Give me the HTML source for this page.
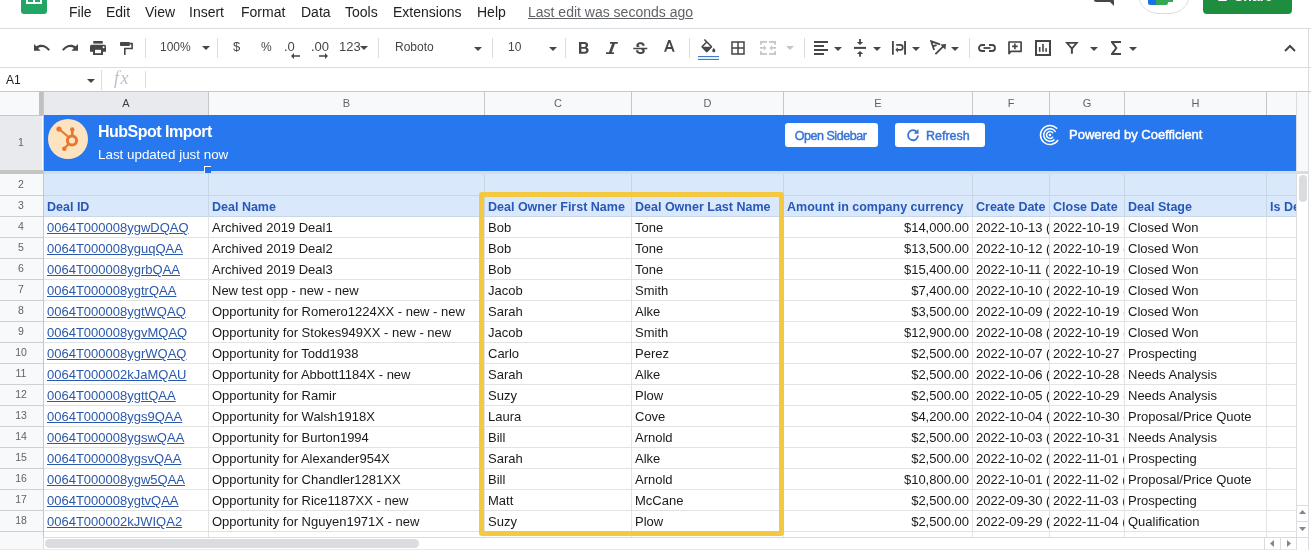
<!DOCTYPE html>
<html><head><meta charset="utf-8"><style>
*{box-sizing:border-box;margin:0;padding:0}
html,body{width:1311px;height:550px;overflow:hidden;background:#fff}
body{will-change:transform}
body{position:relative;font-family:"Liberation Sans",sans-serif;color:#202124}
.ab{position:absolute}
.menu{position:absolute;top:3px;font-size:14px;line-height:18px;color:#202124;white-space:nowrap}
.hl{position:absolute;background:#dadce0}
.sep{position:absolute;top:38px;width:1px;height:20px;background:#dadce0}
.tb{position:absolute;font-size:12px;line-height:14px;color:#444746;white-space:nowrap}
.dd{position:absolute;width:0;height:0;border-left:4px solid transparent;border-right:4px solid transparent;border-top:4px solid #444746}
.ch{position:absolute;top:92px;height:23px;font-size:11px;line-height:23px;text-align:center;color:#5f6368;background:#f8f9fa;border-right:1px solid #c7c7c7}
.rh{position:absolute;left:0;width:42px;font-size:10.5px;text-align:center;color:#5f6368;background:#f8f9fa}
.cell{position:absolute;overflow:hidden;white-space:nowrap;font-size:13px;line-height:21px;padding-left:3px;color:#1a1a1a}
.hdr{font-weight:bold;color:#2957b8;font-size:12.5px}
.lnk{color:#2a58ac;text-decoration:underline}
.num{text-align:right;padding-left:0;padding-right:3px}
svg{position:absolute;overflow:visible}
</style></head><body>

<div class="ab" style="left:21px;top:-12px;width:26px;height:26px;background:#23a566;border-radius:3px"></div>
<div class="ab" style="left:26px;top:-4px;width:16px;height:8px;border:2px solid #fff;background:#23a566"></div>
<div class="ab" style="left:33px;top:-4px;width:2px;height:8px;background:#fff"></div>
<div class="menu" style="left:69px">File</div>
<div class="menu" style="left:106px">Edit</div>
<div class="menu" style="left:145px">View</div>
<div class="menu" style="left:189px">Insert</div>
<div class="menu" style="left:241px">Format</div>
<div class="menu" style="left:301px">Data</div>
<div class="menu" style="left:345px">Tools</div>
<div class="menu" style="left:393px">Extensions</div>
<div class="menu" style="left:477px">Help</div>
<div class="menu" style="left:528px;color:#5f6368;text-decoration:underline">Last edit was seconds ago</div>
<div class="ab" style="left:1094px;top:-11px;width:20px;height:13px;background:#444746;border-radius:2px"></div>
<div class="ab" style="left:1096px;top:-11px;width:16px;height:11px;background:#fff"></div>
<svg style="left:1106px;top:0" width="8" height="6"><path d="M3 1 L8 1 L8 6 Z" fill="#444746"/></svg>
<div class="ab" style="left:1138px;top:-26px;width:52px;height:40px;border:1px solid #dadce0;border-radius:20px;background:#fff"></div>
<div class="ab" style="left:1148px;top:-8px;width:8px;height:13px;background:#1a73e8;border-radius:0 0 0 2px"></div>
<div class="ab" style="left:1156px;top:-8px;width:12px;height:13px;background:#34a853;border-radius:0 0 2px 0"></div>
<div class="ab" style="left:1168px;top:-4px;width:5px;height:6px;background:#34a853"></div>
<div class="ab" style="left:1203px;top:-22px;width:89px;height:36px;background:#1e8e3e;border-radius:4px"></div>
<div class="ab" style="left:1218px;top:-7px;width:9px;height:8px;background:#fff;border-radius:1px"></div>
<div class="ab" style="left:1234px;top:-12px;font-size:14px;font-weight:bold;color:#fff;line-height:16px">Share</div>
<div class="hl" style="left:0;top:28px;width:1311px;height:1px"></div>
<div class="hl" style="left:0;top:67px;width:1311px;height:1px"></div>
<div class="sep" style="left:145px"></div>
<div class="sep" style="left:217px"></div>
<div class="sep" style="left:378px"></div>
<div class="sep" style="left:492px"></div>
<div class="sep" style="left:565px"></div>
<div class="sep" style="left:689px"></div>
<div class="sep" style="left:804px"></div>
<div class="sep" style="left:969px"></div>
<svg style="left:34px;top:44px" width="16" height="7" viewBox="0 0 16 7"><path d="M0 0 L2.3 2.3 C5.8 -0.2 11.8 -0.3 16 5.8 L14.4 6.8 C11.2 2.3 7.2 2.1 4.1 4.1 L6.5 6.7 H0 Z" fill="#444746"/></svg>
<svg style="left:62px;top:44px" width="16" height="7" viewBox="0 0 16 7"><path transform="translate(16 0) scale(-1 1)" d="M0 0 L2.3 2.3 C5.8 -0.2 11.8 -0.3 16 5.8 L14.4 6.8 C11.2 2.3 7.2 2.1 4.1 4.1 L6.5 6.7 H0 Z" fill="#444746"/></svg>
<svg style="left:90px;top:41px" width="16" height="14" viewBox="0 0 16 14"><rect x="3.3" y="0" width="9.4" height="2.6" fill="#444746"/><path d="M1.5 3.8 H14.5 A1.5 1.5 0 0 1 16 5.3 V10.8 H13 V14 H3 V10.8 H0 V5.3 A1.5 1.5 0 0 1 1.5 3.8 Z" fill="#444746"/><rect x="5" y="8.8" width="6" height="3.4" fill="#fff"/><circle cx="13.6" cy="6.3" r="1" fill="#fff"/></svg>
<svg style="left:120px;top:41.5px" width="14" height="14" viewBox="0 0 14 14"><rect x="0" y="0" width="9.8" height="4.1" rx="0.8" fill="#444746"/><path d="M9.6 1.6 H12.1 V6.5 H4.8 V13" fill="none" stroke="#444746" stroke-width="1.6"/></svg>
<div class="tb" style="left:160px;top:40px">100%</div>
<div class="dd" style="left:202px;top:46px"></div>
<div class="tb" style="left:233px;top:40px;font-size:13px">$</div>
<div class="tb" style="left:261px;top:40px;font-size:12px">%</div>
<div class="tb" style="left:284px;top:40px;font-size:13px">.0</div>
<svg style="left:291px;top:53px" width="9" height="6" viewBox="0 0 9 6"><path d="M0 3 L3 0 V2.2 H9 V3.8 H3 V6 Z" fill="#444746"/></svg>
<div class="tb" style="left:311px;top:40px;font-size:13px">.00</div>
<svg style="left:319px;top:53px" width="9" height="6" viewBox="0 0 9 6"><path d="M9 3 L6 0 V2.2 H0 V3.8 H6 V6 Z" fill="#444746"/></svg>
<div class="tb" style="left:339px;top:40px;font-size:13px">123</div>
<div class="dd" style="left:360px;top:46px"></div>
<div class="tb" style="left:395px;top:40px">Roboto</div>
<div class="dd" style="left:474px;top:47px"></div>
<div class="tb" style="left:508px;top:40px">10</div>
<div class="dd" style="left:549px;top:47px"></div>
<svg style="left:579px;top:42px" width="10" height="12" viewBox="0 0 10 12"><path fill-rule="evenodd" d="M0 0 H5.4 C7.8 0 9.1 1.2 9.1 3 C9.1 4.1 8.5 4.9 7.6 5.4 C8.9 5.8 9.6 6.9 9.6 8.3 C9.6 10.5 8 11.8 5.6 11.8 H0 Z M2.4 2 V4.9 H5.2 C6.2 4.9 6.7 4.3 6.7 3.45 C6.7 2.55 6.2 2 5.2 2 Z M2.4 6.8 V9.8 H5.5 C6.6 9.8 7.2 9.2 7.2 8.3 C7.2 7.4 6.6 6.8 5.5 6.8 Z" fill="#444746"/></svg>
<svg style="left:606px;top:42px" width="12" height="12" viewBox="0 0 12 12"><path d="M4 0 H11.8 V1.8 H8.9 L5.8 10.2 H7.9 V12 H0 V10.2 H3 L6.1 1.8 H4 Z" fill="#444746"/></svg>
<svg style="left:630.7px;top:40px" width="18.7" height="18.7" viewBox="0 0 24 24"><path d="M7.24 8.75c-.26-.48-.39-1.03-.39-1.67 0-.61.13-1.16.4-1.67.26-.5.63-.93 1.11-1.29.48-.35 1.050-.63 1.7-.83.66-.19 1.39-.29 2.18-.29.81 0 1.54.11 2.21.34.66.22 1.23.54 1.69.94.47.4.83.88 1.08 1.43.25.55.38 1.15.38 1.81h-3.01c0-.31-.05-.59-.15-.85-.09-.27-.24-.49-.44-.68-.2-.19-.45-.33-.75-.44-.3-.1-.66-.16-1.06-.16-.39 0-.74.04-1.030.13-.29.09-.53.21-.72.36-.19.16-.34.34-.44.55-.1.21-.15.43-.15.66 0 .48.25.88.74 1.21.38.25.77.48 1.41.7H7.39c-.05-.08-.11-.17-.15-.25zM21 12v-2H3v2h9.62c.18.07.4.14.55.2.37.17.66.34.87.51.21.17.35.36.43.57.07.2.11.43.11.69 0 .23-.05.45-.14.66-.09.2-.23.38-.42.53-.19.15-.42.26-.71.35-.29.08-.63.13-1.01.13-.43 0-.83-.04-1.18-.13s-.66-.23-.91-.42c-.25-.19-.45-.44-.59-.75-.14-.31-.25-.76-.25-1.21H6.4c0 .55.08 1.13.24 1.58.16.45.37.85.65 1.210.28.35.6.66.98.92.37.26.78.48 1.22.65.44.17.9.3 1.38.39.48.08.96.13 1.44.13.8 0 1.53-.09 2.18-.28s1.21-.45 1.67-.79c.46-.34.82-.77 1.07-1.27s.38-1.07.38-1.71c0-.6-.1-1.14-.31-1.61-.05-.11-.11-.23-.17-.33H21z" fill="#444746"/></svg>
<svg style="left:663.5px;top:40.2px" width="11" height="12" viewBox="0 0 11 12"><path fill-rule="evenodd" d="M4.3 0 H6.4 L10.7 11.8 H8.6 L7.6 9 H3.1 L2.1 11.8 H0 Z M3.8 7.1 H6.9 L5.35 2.6 Z" fill="#444746"/></svg>
<svg style="left:698.6px;top:39.4px" width="18.7" height="18.7" viewBox="0 0 24 24"><path d="M16.56 8.94L7.62 0 6.21 1.41l2.38 2.38-5.15 5.15c-.59.59-.59 1.54 0 2.12l5.5 5.5c.29.29.68.44 1.06.44s.77-.15 1.06-.44l5.5-5.5c.59-.58.59-1.53 0-2.12zM5.21 10L10 5.21 14.790 10H5.21zM19 11.5s-2 2.17-2 3.5c0 1.1.9 2 2 2s2-.9 2-2c0-1.33-2-3.5-2-3.5z" fill="#444746"/></svg>
<div class="ab" style="left:698px;top:56px;width:21px;height:1px;background:#4a76c9"></div>
<div class="ab" style="left:698px;top:57px;width:21px;height:2px;background:#d9f3ff"></div><div class="ab" style="left:698px;top:59px;width:21px;height:1px;background:#4a76c9"></div>
<svg style="left:728.75px;top:39.15px" width="18" height="18" viewBox="0 0 24 24"><path d="M3 3v18h18V3H3zm8 16H5v-6h6v6zm0-8H5V5h6v6zm8 8h-6v-6h6v6zm0-8h-6V5h6v6z" fill="#444746"/></svg>
<svg style="left:760px;top:41px" width="16" height="14" viewBox="0 0 16 14"><g fill="#c4c7c5"><rect x="0" y="0" width="7" height="1.8"/><rect x="0" y="0" width="1.8" height="3.7"/><rect x="9" y="0" width="7" height="1.8"/><rect x="14.2" y="0" width="1.8" height="3.7"/><rect x="0" y="12" width="7" height="1.8"/><rect x="0" y="10.2" width="1.8" height="3.6"/><rect x="9" y="12" width="7" height="1.8"/><rect x="14.2" y="10.2" width="1.8" height="3.6"/><path d="M0 6 H4 V4.3 L6.6 6.9 L4 9.5 V7.8 H0 Z"/><path d="M16 6 H12 V4.3 L9.4 6.9 L12 9.5 V7.8 H16 Z"/></g></svg>
<div class="dd" style="left:786px;top:46px;border-top-color:#c4c7c5"></div>
<svg style="left:814px;top:41px" width="14" height="14" viewBox="0 0 14 14"><g fill="#444746"><rect x="0" y="0" width="14" height="2"/><rect x="0" y="4" width="10" height="2"/><rect x="0" y="8" width="14" height="2"/><rect x="0" y="12" width="10" height="2"/></g></svg>
<div class="dd" style="left:834px;top:47px"></div>
<svg style="left:854px;top:39px" width="12" height="18" viewBox="0 0 12 18"><g fill="#444746"><rect x="0" y="7.9" width="12" height="2"/><rect x="5.1" y="0" width="1.8" height="3.2"/><path d="M2.8 2.9 H9.2 L6 6 Z"/><rect x="5.1" y="14.7" width="1.8" height="3"/><path d="M2.8 14.9 H9.2 L6 11.9 Z"/></g></svg>
<div class="dd" style="left:873px;top:47px"></div>
<svg style="left:892px;top:41px" width="14" height="14" viewBox="0 0 14 14"><g fill="#444746"><rect x="0" y="0" width="1.8" height="13.7"/><rect x="12.1" y="0" width="1.9" height="13.7"/><path d="M4.2 3.1 H8.3 A3.3 3.3 0 0 1 8.3 9.7 H5.8 V11.5 L3.3 8.85 L5.8 6.2 V8 H8.3 A1.6 1.6 0 0 0 8.3 4.8 H4.2 Z"/></g></svg>
<div class="dd" style="left:912px;top:47px"></div>
<svg style="left:930px;top:40px" width="17" height="15" viewBox="0 0 17 15"><g fill="none" stroke="#444746" stroke-width="1.8" stroke-linecap="butt"><path d="M10 4.3 L1.2 1.3 L4.1 10"/><path d="M2.6 6.3 L6.6 5.1"/><path d="M5.4 14.2 L13.8 5.8"/></g><path d="M16 4 L10.3 4.6 L15.4 9.7 Z" fill="#444746"/></svg>
<div class="dd" style="left:951px;top:47px"></div>
<svg style="left:978px;top:44px" width="18" height="8" viewBox="0 0 18 8"><g fill="none" stroke="#444746" stroke-width="1.8"><path d="M7 1 H4 A3 3 0 0 0 4 7 H7"/><path d="M11 1 H14 A3 3 0 0 1 14 7 H11"/><path d="M5.5 4 H12.5"/></g></svg>
<svg style="left:1008px;top:41px" width="14" height="14" viewBox="0 0 14 14"><path d="M1 1 H13.1 V10.3 H3 L1 12.6 Z" fill="none" stroke="#444746" stroke-width="1.7" stroke-linejoin="round"/><path d="M6.1 2.6 H7.7 V4.6 H9.7 V6.2 H7.7 V8.2 H6.1 V6.2 H4.1 V4.6 H6.1 Z" fill="#444746"/></svg>
<svg style="left:1035px;top:40px" width="16" height="16" viewBox="0 0 16 16"><rect x="1" y="1" width="14" height="14" fill="none" stroke="#444746" stroke-width="2"/><g fill="#444746"><rect x="3.9" y="7" width="1.6" height="4.8"/><rect x="7.2" y="3.9" width="1.6" height="7.9"/><rect x="10.3" y="8.2" width="1.6" height="3.6"/></g></svg>
<svg style="left:1066px;top:42px" width="12" height="12" viewBox="0 0 12 12"><path d="M0.9 0.8 H10.9 L5.9 6.6 Z" fill="none" stroke="#444746" stroke-width="1.7" stroke-linejoin="miter"/><rect x="4.9" y="6" width="2" height="5.7" fill="#444746"/></svg>
<div class="dd" style="left:1090px;top:47px"></div>
<svg style="left:1111px;top:41px" width="10" height="14" viewBox="0 0 10 14"><path d="M0 0 H10 V2 H3 L6.5 7 L3 12 H10 V14 H0 V12.5 L4.2 7 L0 1.5 Z" fill="#444746"/></svg>
<div class="dd" style="left:1129px;top:47px"></div>
<svg style="left:1284px;top:44px" width="12" height="8" viewBox="0 0 12 8"><path d="M1 7 L6 2 L11 7" fill="none" stroke="#444746" stroke-width="2"/></svg>
<div class="hl" style="left:1308px;top:29px;width:1px;height:63px"></div>
<div class="ab" style="left:6px;top:73px;font-size:12px;line-height:14px;color:#202124">A1</div>
<div class="dd" style="left:87px;top:79px;border-width:4px 4px 0 4px;border-top-color:#444746"></div>
<div class="ab" style="left:101px;top:70px;width:1px;height:20px;background:#dadce0"></div>
<div class="ab" style="left:114px;top:67px;font-family:'Liberation Serif',serif;font-style:italic;font-size:18px;letter-spacing:1.5px;line-height:22px;color:#bdc1c6">fx</div>
<div class="ab" style="left:145px;top:71px;width:1px;height:17px;background:#dadce0"></div>
<div class="hl" style="left:0;top:91px;width:1311px;height:1px;background:#c7c7c7"></div>
<div class="ab" style="left:0;top:92px;width:39px;height:23px;background:#f8f9fa"></div>
<div class="ab" style="left:39px;top:92px;width:5px;height:23px;background:#c0c0c0"></div>
<div class="ch" style="left:44px;width:165px;background:#e8eaed;color:#3c4043">A</div>
<div class="ch" style="left:209px;width:276px;background:#f8f9fa;color:#5f6368">B</div>
<div class="ch" style="left:485px;width:147px;background:#f8f9fa;color:#5f6368">C</div>
<div class="ch" style="left:632px;width:152px;background:#f8f9fa;color:#5f6368">D</div>
<div class="ch" style="left:784px;width:189px;background:#f8f9fa;color:#5f6368">E</div>
<div class="ch" style="left:973px;width:77px;background:#f8f9fa;color:#5f6368">F</div>
<div class="ch" style="left:1050px;width:75px;background:#f8f9fa;color:#5f6368">G</div>
<div class="ch" style="left:1125px;width:142px;background:#f8f9fa;color:#5f6368">H</div>
<div class="ch" style="left:1267px;width:30px;background:#f8f9fa;color:#5f6368"></div>
<div class="hl" style="left:0;top:115px;width:1296px;height:1px;background:#c7c7c7"></div>
<div class="rh" style="top:116px;height:54px;line-height:53px;background:#e8eaed;color:#5f6368">1</div>
<div class="ab" style="left:44px;top:115px;width:1252px;height:56px;background:#2777ef"></div>
<div class="ab" style="left:0;top:170px;width:43px;height:5px;background:#c4c4c4"></div>
<div class="ab" style="left:44px;top:171px;width:1252px;height:3px;background:#d5dde6"></div>
<div class="ab" style="left:0;top:174px;width:44px;height:364px;background:#f8f9fa"></div>
<div class="rh" style="top:174px;height:21px;line-height:21px">2</div>
<div class="rh" style="top:195px;height:21px;line-height:21px">3</div>
<div class="rh" style="top:216px;height:21px;line-height:21px">4</div>
<div class="rh" style="top:237px;height:21px;line-height:21px">5</div>
<div class="rh" style="top:258px;height:21px;line-height:21px">6</div>
<div class="rh" style="top:279px;height:21px;line-height:21px">7</div>
<div class="rh" style="top:300px;height:21px;line-height:21px">8</div>
<div class="rh" style="top:321px;height:21px;line-height:21px">9</div>
<div class="rh" style="top:342px;height:21px;line-height:21px">10</div>
<div class="rh" style="top:363px;height:21px;line-height:21px">11</div>
<div class="rh" style="top:384px;height:21px;line-height:21px">12</div>
<div class="rh" style="top:405px;height:21px;line-height:21px">13</div>
<div class="rh" style="top:426px;height:21px;line-height:21px">14</div>
<div class="rh" style="top:447px;height:21px;line-height:21px">15</div>
<div class="rh" style="top:468px;height:21px;line-height:21px">16</div>
<div class="rh" style="top:489px;height:21px;line-height:21px">17</div>
<div class="rh" style="top:510px;height:21px;line-height:21px">18</div>
<div class="rh" style="top:531px;height:21px;line-height:21px">19</div>
<div class="hl" style="left:44px;top:195px;width:1252px;height:1px;background:#e2e3e3"></div>
<div class="hl" style="left:0;top:195px;width:43px;height:1px;background:#d0d0d0"></div>
<div class="hl" style="left:44px;top:216px;width:1252px;height:1px;background:#e2e3e3"></div>
<div class="hl" style="left:0;top:216px;width:43px;height:1px;background:#d0d0d0"></div>
<div class="hl" style="left:44px;top:237px;width:1252px;height:1px;background:#e2e3e3"></div>
<div class="hl" style="left:0;top:237px;width:43px;height:1px;background:#d0d0d0"></div>
<div class="hl" style="left:44px;top:258px;width:1252px;height:1px;background:#e2e3e3"></div>
<div class="hl" style="left:0;top:258px;width:43px;height:1px;background:#d0d0d0"></div>
<div class="hl" style="left:44px;top:279px;width:1252px;height:1px;background:#e2e3e3"></div>
<div class="hl" style="left:0;top:279px;width:43px;height:1px;background:#d0d0d0"></div>
<div class="hl" style="left:44px;top:300px;width:1252px;height:1px;background:#e2e3e3"></div>
<div class="hl" style="left:0;top:300px;width:43px;height:1px;background:#d0d0d0"></div>
<div class="hl" style="left:44px;top:321px;width:1252px;height:1px;background:#e2e3e3"></div>
<div class="hl" style="left:0;top:321px;width:43px;height:1px;background:#d0d0d0"></div>
<div class="hl" style="left:44px;top:342px;width:1252px;height:1px;background:#e2e3e3"></div>
<div class="hl" style="left:0;top:342px;width:43px;height:1px;background:#d0d0d0"></div>
<div class="hl" style="left:44px;top:363px;width:1252px;height:1px;background:#e2e3e3"></div>
<div class="hl" style="left:0;top:363px;width:43px;height:1px;background:#d0d0d0"></div>
<div class="hl" style="left:44px;top:384px;width:1252px;height:1px;background:#e2e3e3"></div>
<div class="hl" style="left:0;top:384px;width:43px;height:1px;background:#d0d0d0"></div>
<div class="hl" style="left:44px;top:405px;width:1252px;height:1px;background:#e2e3e3"></div>
<div class="hl" style="left:0;top:405px;width:43px;height:1px;background:#d0d0d0"></div>
<div class="hl" style="left:44px;top:426px;width:1252px;height:1px;background:#e2e3e3"></div>
<div class="hl" style="left:0;top:426px;width:43px;height:1px;background:#d0d0d0"></div>
<div class="hl" style="left:44px;top:447px;width:1252px;height:1px;background:#e2e3e3"></div>
<div class="hl" style="left:0;top:447px;width:43px;height:1px;background:#d0d0d0"></div>
<div class="hl" style="left:44px;top:468px;width:1252px;height:1px;background:#e2e3e3"></div>
<div class="hl" style="left:0;top:468px;width:43px;height:1px;background:#d0d0d0"></div>
<div class="hl" style="left:44px;top:489px;width:1252px;height:1px;background:#e2e3e3"></div>
<div class="hl" style="left:0;top:489px;width:43px;height:1px;background:#d0d0d0"></div>
<div class="hl" style="left:44px;top:510px;width:1252px;height:1px;background:#e2e3e3"></div>
<div class="hl" style="left:0;top:510px;width:43px;height:1px;background:#d0d0d0"></div>
<div class="hl" style="left:44px;top:531px;width:1252px;height:1px;background:#e2e3e3"></div>
<div class="hl" style="left:0;top:531px;width:43px;height:1px;background:#d0d0d0"></div>
<div class="hl" style="left:44px;top:552px;width:1252px;height:1px;background:#e2e3e3"></div>
<div class="hl" style="left:0;top:552px;width:43px;height:1px;background:#d0d0d0"></div>
<div class="ab" style="left:43px;top:92px;width:1px;height:446px;background:#c7c7c7"></div>
<div class="ab" style="left:44px;top:174px;width:1252px;height:42px;background:#d9e9fb"></div>
<div class="ab" style="left:208px;top:174px;width:1px;height:364px;background:#e2e3e3"></div>
<div class="ab" style="left:484px;top:174px;width:1px;height:364px;background:#e2e3e3"></div>
<div class="ab" style="left:631px;top:174px;width:1px;height:364px;background:#e2e3e3"></div>
<div class="ab" style="left:783px;top:174px;width:1px;height:364px;background:#e2e3e3"></div>
<div class="ab" style="left:972px;top:174px;width:1px;height:364px;background:#e2e3e3"></div>
<div class="ab" style="left:1049px;top:174px;width:1px;height:364px;background:#e2e3e3"></div>
<div class="ab" style="left:1124px;top:174px;width:1px;height:364px;background:#e2e3e3"></div>
<div class="ab" style="left:1266px;top:174px;width:1px;height:364px;background:#e2e3e3"></div>
<div class="ab" style="left:1296px;top:174px;width:1px;height:364px;background:#e2e3e3"></div>
<div class="hl" style="left:44px;top:195px;width:1252px;height:1px;background:#c9d6e6"></div>
<div class="hl" style="left:44px;top:216px;width:1252px;height:1px;background:#c9d6e6"></div>
<div class="ab" style="left:208px;top:174px;width:1px;height:42px;background:#c9d6e6"></div>
<div class="ab" style="left:484px;top:174px;width:1px;height:42px;background:#c9d6e6"></div>
<div class="ab" style="left:631px;top:174px;width:1px;height:42px;background:#c9d6e6"></div>
<div class="ab" style="left:783px;top:174px;width:1px;height:42px;background:#c9d6e6"></div>
<div class="ab" style="left:972px;top:174px;width:1px;height:42px;background:#c9d6e6"></div>
<div class="ab" style="left:1049px;top:174px;width:1px;height:42px;background:#c9d6e6"></div>
<div class="ab" style="left:1124px;top:174px;width:1px;height:42px;background:#c9d6e6"></div>
<div class="ab" style="left:1266px;top:174px;width:1px;height:42px;background:#c9d6e6"></div>
<div class="ab" style="left:1296px;top:174px;width:1px;height:42px;background:#c9d6e6"></div>
<div class="cell hdr" style="left:44px;top:196px;width:164px;height:20px;line-height:22px">Deal ID</div>
<div class="cell hdr" style="left:209px;top:196px;width:275px;height:20px;line-height:22px">Deal Name</div>
<div class="cell hdr" style="left:485px;top:196px;width:146px;height:20px;line-height:22px">Deal Owner First Name</div>
<div class="cell hdr" style="left:632px;top:196px;width:151px;height:20px;line-height:22px">Deal Owner Last Name</div>
<div class="cell hdr" style="left:784px;top:196px;width:188px;height:20px;line-height:22px">Amount in company currency</div>
<div class="cell hdr" style="left:973px;top:196px;width:76px;height:20px;line-height:22px">Create Date</div>
<div class="cell hdr" style="left:1050px;top:196px;width:74px;height:20px;line-height:22px">Close Date</div>
<div class="cell hdr" style="left:1125px;top:196px;width:141px;height:20px;line-height:22px">Deal Stage</div>
<div class="cell hdr" style="left:1267px;top:196px;width:29px;height:20px;line-height:22px">Is Deleted</div>
<div class="cell lnk" style="left:44px;top:218px;width:164px;height:20px;line-height:20px">0064T000008ygwDQAQ</div>
<div class="cell" style="left:209px;top:218px;width:275px;height:20px;line-height:20px">Archived 2019 Deal1</div>
<div class="cell" style="left:485px;top:218px;width:146px;height:20px;line-height:20px">Bob</div>
<div class="cell" style="left:632px;top:218px;width:151px;height:20px;line-height:20px">Tone</div>
<div class="cell num" style="left:784px;top:218px;width:188px;height:20px;line-height:20px">$14,000.00</div>
<div class="cell" style="left:973px;top:218px;width:76px;height:20px;line-height:20px">2022-10-13 (</div>
<div class="cell" style="left:1050px;top:218px;width:74px;height:20px;line-height:20px">2022-10-19 (</div>
<div class="cell" style="left:1125px;top:218px;width:141px;height:20px;line-height:20px">Closed Won</div>
<div class="cell lnk" style="left:44px;top:239px;width:164px;height:20px;line-height:20px">0064T000008yguqQAA</div>
<div class="cell" style="left:209px;top:239px;width:275px;height:20px;line-height:20px">Archived 2019 Deal2</div>
<div class="cell" style="left:485px;top:239px;width:146px;height:20px;line-height:20px">Bob</div>
<div class="cell" style="left:632px;top:239px;width:151px;height:20px;line-height:20px">Tone</div>
<div class="cell num" style="left:784px;top:239px;width:188px;height:20px;line-height:20px">$13,500.00</div>
<div class="cell" style="left:973px;top:239px;width:76px;height:20px;line-height:20px">2022-10-12 (</div>
<div class="cell" style="left:1050px;top:239px;width:74px;height:20px;line-height:20px">2022-10-19 (</div>
<div class="cell" style="left:1125px;top:239px;width:141px;height:20px;line-height:20px">Closed Won</div>
<div class="cell lnk" style="left:44px;top:260px;width:164px;height:20px;line-height:20px">0064T000008ygrbQAA</div>
<div class="cell" style="left:209px;top:260px;width:275px;height:20px;line-height:20px">Archived 2019 Deal3</div>
<div class="cell" style="left:485px;top:260px;width:146px;height:20px;line-height:20px">Bob</div>
<div class="cell" style="left:632px;top:260px;width:151px;height:20px;line-height:20px">Tone</div>
<div class="cell num" style="left:784px;top:260px;width:188px;height:20px;line-height:20px">$15,400.00</div>
<div class="cell" style="left:973px;top:260px;width:76px;height:20px;line-height:20px">2022-10-11 (</div>
<div class="cell" style="left:1050px;top:260px;width:74px;height:20px;line-height:20px">2022-10-19 (</div>
<div class="cell" style="left:1125px;top:260px;width:141px;height:20px;line-height:20px">Closed Won</div>
<div class="cell lnk" style="left:44px;top:281px;width:164px;height:20px;line-height:20px">0064T000008ygtrQAA</div>
<div class="cell" style="left:209px;top:281px;width:275px;height:20px;line-height:20px">New test opp - new - new</div>
<div class="cell" style="left:485px;top:281px;width:146px;height:20px;line-height:20px">Jacob</div>
<div class="cell" style="left:632px;top:281px;width:151px;height:20px;line-height:20px">Smith</div>
<div class="cell num" style="left:784px;top:281px;width:188px;height:20px;line-height:20px">$7,400.00</div>
<div class="cell" style="left:973px;top:281px;width:76px;height:20px;line-height:20px">2022-10-10 (</div>
<div class="cell" style="left:1050px;top:281px;width:74px;height:20px;line-height:20px">2022-10-19 (</div>
<div class="cell" style="left:1125px;top:281px;width:141px;height:20px;line-height:20px">Closed Won</div>
<div class="cell lnk" style="left:44px;top:302px;width:164px;height:20px;line-height:20px">0064T000008ygtWQAQ</div>
<div class="cell" style="left:209px;top:302px;width:275px;height:20px;line-height:20px">Opportunity for Romero1224XX - new - new</div>
<div class="cell" style="left:485px;top:302px;width:146px;height:20px;line-height:20px">Sarah</div>
<div class="cell" style="left:632px;top:302px;width:151px;height:20px;line-height:20px">Alke</div>
<div class="cell num" style="left:784px;top:302px;width:188px;height:20px;line-height:20px">$3,500.00</div>
<div class="cell" style="left:973px;top:302px;width:76px;height:20px;line-height:20px">2022-10-09 (</div>
<div class="cell" style="left:1050px;top:302px;width:74px;height:20px;line-height:20px">2022-10-19 (</div>
<div class="cell" style="left:1125px;top:302px;width:141px;height:20px;line-height:20px">Closed Won</div>
<div class="cell lnk" style="left:44px;top:323px;width:164px;height:20px;line-height:20px">0064T000008ygvMQAQ</div>
<div class="cell" style="left:209px;top:323px;width:275px;height:20px;line-height:20px">Opportunity for Stokes949XX - new - new</div>
<div class="cell" style="left:485px;top:323px;width:146px;height:20px;line-height:20px">Jacob</div>
<div class="cell" style="left:632px;top:323px;width:151px;height:20px;line-height:20px">Smith</div>
<div class="cell num" style="left:784px;top:323px;width:188px;height:20px;line-height:20px">$12,900.00</div>
<div class="cell" style="left:973px;top:323px;width:76px;height:20px;line-height:20px">2022-10-08 (</div>
<div class="cell" style="left:1050px;top:323px;width:74px;height:20px;line-height:20px">2022-10-19 (</div>
<div class="cell" style="left:1125px;top:323px;width:141px;height:20px;line-height:20px">Closed Won</div>
<div class="cell lnk" style="left:44px;top:344px;width:164px;height:20px;line-height:20px">0064T000008ygrWQAQ</div>
<div class="cell" style="left:209px;top:344px;width:275px;height:20px;line-height:20px">Opportunity for Todd1938</div>
<div class="cell" style="left:485px;top:344px;width:146px;height:20px;line-height:20px">Carlo</div>
<div class="cell" style="left:632px;top:344px;width:151px;height:20px;line-height:20px">Perez</div>
<div class="cell num" style="left:784px;top:344px;width:188px;height:20px;line-height:20px">$2,500.00</div>
<div class="cell" style="left:973px;top:344px;width:76px;height:20px;line-height:20px">2022-10-07 (</div>
<div class="cell" style="left:1050px;top:344px;width:74px;height:20px;line-height:20px">2022-10-27 (</div>
<div class="cell" style="left:1125px;top:344px;width:141px;height:20px;line-height:20px">Prospecting</div>
<div class="cell lnk" style="left:44px;top:365px;width:164px;height:20px;line-height:20px">0064T000002kJaMQAU</div>
<div class="cell" style="left:209px;top:365px;width:275px;height:20px;line-height:20px">Opportunity for Abbott1184X - new</div>
<div class="cell" style="left:485px;top:365px;width:146px;height:20px;line-height:20px">Sarah</div>
<div class="cell" style="left:632px;top:365px;width:151px;height:20px;line-height:20px">Alke</div>
<div class="cell num" style="left:784px;top:365px;width:188px;height:20px;line-height:20px">$2,500.00</div>
<div class="cell" style="left:973px;top:365px;width:76px;height:20px;line-height:20px">2022-10-06 (</div>
<div class="cell" style="left:1050px;top:365px;width:74px;height:20px;line-height:20px">2022-10-28 (</div>
<div class="cell" style="left:1125px;top:365px;width:141px;height:20px;line-height:20px">Needs Analysis</div>
<div class="cell lnk" style="left:44px;top:386px;width:164px;height:20px;line-height:20px">0064T000008ygttQAA</div>
<div class="cell" style="left:209px;top:386px;width:275px;height:20px;line-height:20px">Opportunity for Ramir</div>
<div class="cell" style="left:485px;top:386px;width:146px;height:20px;line-height:20px">Suzy</div>
<div class="cell" style="left:632px;top:386px;width:151px;height:20px;line-height:20px">Plow</div>
<div class="cell num" style="left:784px;top:386px;width:188px;height:20px;line-height:20px">$2,500.00</div>
<div class="cell" style="left:973px;top:386px;width:76px;height:20px;line-height:20px">2022-10-05 (</div>
<div class="cell" style="left:1050px;top:386px;width:74px;height:20px;line-height:20px">2022-10-29 (</div>
<div class="cell" style="left:1125px;top:386px;width:141px;height:20px;line-height:20px">Needs Analysis</div>
<div class="cell lnk" style="left:44px;top:407px;width:164px;height:20px;line-height:20px">0064T000008ygs9QAA</div>
<div class="cell" style="left:209px;top:407px;width:275px;height:20px;line-height:20px">Opportunity for Walsh1918X</div>
<div class="cell" style="left:485px;top:407px;width:146px;height:20px;line-height:20px">Laura</div>
<div class="cell" style="left:632px;top:407px;width:151px;height:20px;line-height:20px">Cove</div>
<div class="cell num" style="left:784px;top:407px;width:188px;height:20px;line-height:20px">$4,200.00</div>
<div class="cell" style="left:973px;top:407px;width:76px;height:20px;line-height:20px">2022-10-04 (</div>
<div class="cell" style="left:1050px;top:407px;width:74px;height:20px;line-height:20px">2022-10-30 (</div>
<div class="cell" style="left:1125px;top:407px;width:141px;height:20px;line-height:20px">Proposal/Price Quote</div>
<div class="cell lnk" style="left:44px;top:428px;width:164px;height:20px;line-height:20px">0064T000008ygswQAA</div>
<div class="cell" style="left:209px;top:428px;width:275px;height:20px;line-height:20px">Opportunity for Burton1994</div>
<div class="cell" style="left:485px;top:428px;width:146px;height:20px;line-height:20px">Bill</div>
<div class="cell" style="left:632px;top:428px;width:151px;height:20px;line-height:20px">Arnold</div>
<div class="cell num" style="left:784px;top:428px;width:188px;height:20px;line-height:20px">$2,500.00</div>
<div class="cell" style="left:973px;top:428px;width:76px;height:20px;line-height:20px">2022-10-03 (</div>
<div class="cell" style="left:1050px;top:428px;width:74px;height:20px;line-height:20px">2022-10-31 (</div>
<div class="cell" style="left:1125px;top:428px;width:141px;height:20px;line-height:20px">Needs Analysis</div>
<div class="cell lnk" style="left:44px;top:449px;width:164px;height:20px;line-height:20px">0064T000008ygsvQAA</div>
<div class="cell" style="left:209px;top:449px;width:275px;height:20px;line-height:20px">Opportunity for Alexander954X</div>
<div class="cell" style="left:485px;top:449px;width:146px;height:20px;line-height:20px">Sarah</div>
<div class="cell" style="left:632px;top:449px;width:151px;height:20px;line-height:20px">Alke</div>
<div class="cell num" style="left:784px;top:449px;width:188px;height:20px;line-height:20px">$2,500.00</div>
<div class="cell" style="left:973px;top:449px;width:76px;height:20px;line-height:20px">2022-10-02 (</div>
<div class="cell" style="left:1050px;top:449px;width:74px;height:20px;line-height:20px">2022-11-01 (</div>
<div class="cell" style="left:1125px;top:449px;width:141px;height:20px;line-height:20px">Prospecting</div>
<div class="cell lnk" style="left:44px;top:470px;width:164px;height:20px;line-height:20px">0064T000008ygw5QAA</div>
<div class="cell" style="left:209px;top:470px;width:275px;height:20px;line-height:20px">Opportunity for Chandler1281XX</div>
<div class="cell" style="left:485px;top:470px;width:146px;height:20px;line-height:20px">Bill</div>
<div class="cell" style="left:632px;top:470px;width:151px;height:20px;line-height:20px">Arnold</div>
<div class="cell num" style="left:784px;top:470px;width:188px;height:20px;line-height:20px">$10,800.00</div>
<div class="cell" style="left:973px;top:470px;width:76px;height:20px;line-height:20px">2022-10-01 (</div>
<div class="cell" style="left:1050px;top:470px;width:74px;height:20px;line-height:20px">2022-11-02 (</div>
<div class="cell" style="left:1125px;top:470px;width:141px;height:20px;line-height:20px">Proposal/Price Quote</div>
<div class="cell lnk" style="left:44px;top:491px;width:164px;height:20px;line-height:20px">0064T000008ygtvQAA</div>
<div class="cell" style="left:209px;top:491px;width:275px;height:20px;line-height:20px">Opportunity for Rice1187XX - new</div>
<div class="cell" style="left:485px;top:491px;width:146px;height:20px;line-height:20px">Matt</div>
<div class="cell" style="left:632px;top:491px;width:151px;height:20px;line-height:20px">McCane</div>
<div class="cell num" style="left:784px;top:491px;width:188px;height:20px;line-height:20px">$2,500.00</div>
<div class="cell" style="left:973px;top:491px;width:76px;height:20px;line-height:20px">2022-09-30 (</div>
<div class="cell" style="left:1050px;top:491px;width:74px;height:20px;line-height:20px">2022-11-03 (</div>
<div class="cell" style="left:1125px;top:491px;width:141px;height:20px;line-height:20px">Prospecting</div>
<div class="cell lnk" style="left:44px;top:512px;width:164px;height:20px;line-height:20px">0064T000002kJWIQA2</div>
<div class="cell" style="left:209px;top:512px;width:275px;height:20px;line-height:20px">Opportunity for Nguyen1971X - new</div>
<div class="cell" style="left:485px;top:512px;width:146px;height:20px;line-height:20px">Suzy</div>
<div class="cell" style="left:632px;top:512px;width:151px;height:20px;line-height:20px">Plow</div>
<div class="cell num" style="left:784px;top:512px;width:188px;height:20px;line-height:20px">$2,500.00</div>
<div class="cell" style="left:973px;top:512px;width:76px;height:20px;line-height:20px">2022-09-29 (</div>
<div class="cell" style="left:1050px;top:512px;width:74px;height:20px;line-height:20px">2022-11-04 (</div>
<div class="cell" style="left:1125px;top:512px;width:141px;height:20px;line-height:20px">Qualification</div>
<div class="ab" style="left:48px;top:119px;width:40px;height:40px;border-radius:50%;background:#fde3c0"></div>
<svg style="left:48px;top:119px" width="40" height="40" viewBox="0 0 40 40"><g fill="none" stroke="#e8772e" stroke-linecap="round"><circle cx="24" cy="21.5" r="4.6" stroke-width="3"/><path d="M11 10 L20.5 18" stroke-width="2.2"/><path d="M24.3 10.5 V16.5" stroke-width="2.6"/><path d="M20.6 25 L16.3 29.5" stroke-width="2.2"/></g><circle cx="11" cy="10" r="2.6" fill="#e8772e"/><circle cx="24.3" cy="10.5" r="2.2" fill="#e8772e"/><circle cx="16.3" cy="29.7" r="2.2" fill="#e8772e"/></svg>
<div class="ab" style="left:98px;top:123px;font-size:16px;letter-spacing:-0.5px;font-weight:bold;line-height:18px;color:#fff">HubSpot Import</div>
<div class="ab" style="left:98px;top:147px;font-size:13.4px;line-height:16px;color:#fff">Last updated just now</div>
<div class="ab" style="left:785px;top:123px;width:93px;height:24px;background:#fff;border-radius:3px"></div>
<div class="ab" style="left:784px;top:124px;width:93px;height:24px;font-size:12.5px;letter-spacing:-0.45px;-webkit-text-stroke:0.45px #3a74d6;line-height:24px;text-align:center;color:#3a74d6">Open Sidebar</div>
<div class="ab" style="left:895px;top:123px;width:90px;height:24px;background:#fff;border-radius:3px"></div>
<svg style="left:907px;top:129px" width="12" height="12" viewBox="0 0 12 12"><path d="M10 3.2 A5 5 0 1 0 11 6.5" fill="none" stroke="#3a74d6" stroke-width="1.8"/><path d="M11.5 0 V4.8 H6.7 Z" fill="#3a74d6"/></svg>
<div class="ab" style="left:926px;top:129px;font-size:12.5px;-webkit-text-stroke:0.45px #3a74d6;line-height:15px;color:#3a74d6">Refresh</div>
<svg style="left:1040px;top:125px" width="20" height="20" viewBox="0 0 20 20"><g fill="none" stroke="#fff" stroke-width="1.5" stroke-linecap="round"><path d="M16.7 3.3 A9.5 9.5 0 1 0 17.8 15.4"/><path d="M15.2 6.4 A6.3 6.3 0 1 0 14 14.8"/><path d="M12.7 7.75 A3.5 3.5 0 1 0 12.7 12.25"/></g><circle cx="10" cy="10" r="1.3" fill="#fff"/></svg>
<div class="ab" style="left:1069px;top:127px;font-size:13px;-webkit-text-stroke:0.45px #fff;line-height:15px;color:#fff">Powered by Coefficient</div>
<div class="ab" style="left:204px;top:166px;width:7px;height:7px;background:#1a73e8;border-top:1px solid #fff;border-left:1px solid #fff"></div>
<div class="ab" style="left:479px;top:192px;width:305px;height:344px;border:5px solid #f5c842;border-radius:3px"></div>
<div class="ab" style="left:1296px;top:92px;width:15px;height:458px;background:#fff"></div><div class="ab" style="left:1296px;top:92px;width:13px;height:79px;background:#f8f9fa"></div>
<div class="ab" style="left:1296px;top:92px;width:1px;height:458px;background:#dadce0"></div>
<div class="ab" style="left:1308px;top:92px;width:1px;height:458px;background:#dadce0"></div>
<div class="ab" style="left:1297px;top:171px;width:11px;height:3px;background:#dadce0"></div>
<div class="ab" style="left:1299px;top:175px;width:8px;height:27px;background:#dadce0;border-radius:4px"></div>
<div class="ab" style="left:1297px;top:505px;width:11px;height:1px;background:#dadce0"></div>
<div class="ab" style="left:1297px;top:521px;width:11px;height:1px;background:#dadce0"></div>
<svg style="left:1299px;top:510px" width="7" height="4"><path d="M0 4 L3.5 0 L7 4 Z" fill="#80868b"/></svg>
<svg style="left:1299px;top:527px" width="7" height="4"><path d="M0 0 L3.5 4 L7 0 Z" fill="#80868b"/></svg>
<div class="ab" style="left:0;top:537px;width:1296px;height:13px;background:#fff"></div>
<div class="ab" style="left:0;top:537px;width:1309px;height:1px;background:#dadce0"></div>
<div class="ab" style="left:0;top:537px;width:43px;height:13px;background:#f8f9fa"></div>
<div class="ab" style="left:43px;top:537px;width:1px;height:13px;background:#dadce0"></div>
<div class="ab" style="left:0;top:549px;width:1296px;height:1px;background:#e8e8e8"></div>
<div class="ab" style="left:45px;top:539px;width:374px;height:9px;background:#dadce0;border-radius:5px"></div>
<div class="ab" style="left:1264px;top:538px;width:1px;height:12px;background:#dadce0"></div>
<div class="ab" style="left:1280px;top:538px;width:1px;height:12px;background:#dadce0"></div>
<svg style="left:1270px;top:540px" width="4" height="7"><path d="M4 0 L0 3.5 L4 7 Z" fill="#80868b"/></svg>
<svg style="left:1287px;top:540px" width="4" height="7"><path d="M0 0 L4 3.5 L0 7 Z" fill="#80868b"/></svg>
</body></html>
